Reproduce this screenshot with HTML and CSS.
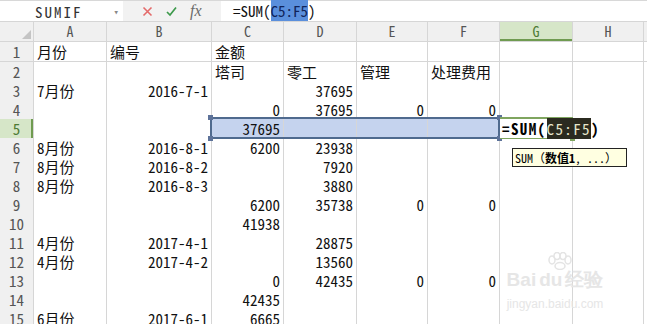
FILE: index.html
```html
<!DOCTYPE html>
<html lang="zh">
<head>
  <meta charset="UTF-8" />
  <title>SUM</title>
  <link rel="stylesheet" href="styles.css">
</head>
<body>

  <!-- formula bar -->
  <div class="fbar">
    <div class="namebox"><span class="name">SUMIF</span><span class="drop">&#9662;</span></div>
    <div class="tools">
      <svg class="ico" width="11" height="11" viewBox="0 0 11 11"><path d="M1.5 1.5 L9.5 9.5 M9.5 1.5 L1.5 9.5" stroke="#e46a6a" stroke-width="1.6" fill="none"/></svg>
      <svg class="ico" width="11" height="11" viewBox="0 0 11 11"><path d="M1 6 L4 9 L10 1.5" stroke="#3d9a4c" stroke-width="1.7" fill="none"/></svg>
      <span class="fx">fx</span>
    </div>
    <div class="formula">=SUM(<span class="hl">C5:F5</span>)</div>
  </div>

  <!-- sheet -->
  <div class="sheet">
    <div class="r hdr">
      <div class="corner"><svg width="9" height="9" viewBox="0 0 9 9"><path d="M9 0 L9 9 L0 9 Z" fill="#c4c4c4"/></svg></div>
      <div>A</div><div>B</div><div>C</div><div>D</div><div>E</div><div>F</div><div class="cur">G</div><div>H</div><div></div>
    </div>
    <div class="r tall">
      <div class="h">1</div><div>月份</div><div>编号</div><div>金额</div><div></div><div></div><div></div><div></div><div></div><div></div>
    </div>
    <div class="r">
      <div class="h">2</div><div></div><div></div><div>塔司</div><div>零工</div><div>管理</div><div>处理费用</div><div></div><div></div><div></div>
    </div>
    <div class="r">
      <div class="h">3</div><div>7月份</div><div class="n">2016-7-1</div><div></div><div class="n">37695</div><div></div><div></div><div></div><div></div><div></div>
    </div>
    <div class="r">
      <div class="h">4</div><div></div><div></div><div class="n">0</div><div class="n">37695</div><div class="n">0</div><div class="n">0</div><div></div><div></div><div></div>
    </div>
    <div class="r">
      <div class="h cur">5</div><div></div><div></div><div class="n sel">37695</div><div class="sel"></div><div class="sel"></div><div class="sel"></div>
      <div class="edit">=SUM(<span class="hl2">C5:F5</span>)</div><div></div><div></div>
    </div>
    <div class="r">
      <div class="h">6</div><div>8月份</div><div class="n">2016-8-1</div><div class="n">6200</div><div class="n">23938</div><div></div><div></div><div></div><div></div><div></div>
    </div>
    <div class="r">
      <div class="h">7</div><div>8月份</div><div class="n">2016-8-2</div><div></div><div class="n">7920</div><div></div><div></div><div></div><div></div><div></div>
    </div>
    <div class="r">
      <div class="h">8</div><div>8月份</div><div class="n">2016-8-3</div><div></div><div class="n">3880</div><div></div><div></div><div></div><div></div><div></div>
    </div>
    <div class="r">
      <div class="h">9</div><div></div><div></div><div class="n">6200</div><div class="n">35738</div><div class="n">0</div><div class="n">0</div><div></div><div></div><div></div>
    </div>
    <div class="r">
      <div class="h">10</div><div></div><div></div><div class="n">41938</div><div></div><div></div><div></div><div></div><div></div><div></div>
    </div>
    <div class="r">
      <div class="h">11</div><div>4月份</div><div class="n">2017-4-1</div><div></div><div class="n">28875</div><div></div><div></div><div></div><div></div><div></div>
    </div>
    <div class="r">
      <div class="h">12</div><div>4月份</div><div class="n">2017-4-2</div><div></div><div class="n">13560</div><div></div><div></div><div></div><div></div><div></div>
    </div>
    <div class="r">
      <div class="h">13</div><div></div><div></div><div class="n">0</div><div class="n">42435</div><div class="n">0</div><div class="n">0</div><div></div><div></div><div></div>
    </div>
    <div class="r">
      <div class="h">14</div><div></div><div></div><div class="n">42435</div><div></div><div></div><div></div><div></div><div></div><div></div>
    </div>
    <div class="r">
      <div class="h">15</div><div>6月份</div><div class="n">2017-6-1</div><div class="n">6665</div><div></div><div></div><div></div><div></div><div></div><div></div>
    </div>

    <!-- selection overlays -->
    <div class="range">
      <i class="hd tl"></i><i class="hd bl"></i><i class="hd tr"></i><i class="hd br"></i>
    </div>
    <div class="active"><i class="hd2"></i></div>
    <div class="tip">SUM（<b>数值1</b>, ...）</div>
    <div class="mark">
      <svg class="paw" width="30" height="18" viewBox="0 0 30 18"><g fill="none" stroke="#e4e4e4" stroke-width="1.5"><ellipse cx="7" cy="8" rx="3" ry="4"/><ellipse cx="12" cy="4" rx="3" ry="3.5"/><ellipse cx="18" cy="4" rx="3" ry="3.5"/><ellipse cx="23" cy="8" rx="3" ry="4"/><ellipse cx="15" cy="14" rx="5" ry="3.5"/></g></svg>
      <div class="brand">Bai<span class="du">du</span>经验</div>
      <div class="url">jingyan.baidu.com</div>
    </div>
  </div>

</body>
</html>
```

FILE: styles.css
```css
body {
  margin: 0;
  width: 647px;
  height: 324px;
  overflow: hidden;
  background: #fff;
  font-family: "Noto Sans Mono CJK SC", "Noto Sans CJK SC", monospace;
  color: #111;
}

/* formula bar */
.fbar {
  display: flex;
  height: 21px;
  box-sizing: border-box;
  border-top: 1px solid #d8d8d8;
  background: #f2f2f2;
}

.namebox {
  width: 123px;
  box-sizing: border-box;
  padding: 0 4px 0 35px;
  display: flex;
  align-items: center;
  justify-content: space-between;
  background: #fff;
  font-size: 15px;
  color: #333;
}

.name {
  letter-spacing: 2px;
}

.drop {
  font-size: 9px;
  color: #888;
}

.tools {
  width: 98px;
  box-sizing: border-box;
  padding-left: 19px;
  display: flex;
  align-items: center;
  gap: 13px;
}

.fx {
  font-family: "Liberation Serif", serif;
  font-style: italic;
  font-size: 16px;
  color: #6a6a6a;
  line-height: 18px;
}

.formula {
  flex: 1;
  background: #fff;
  padding-left: 12px;
  font-size: 15px;
  line-height: 20px;
  color: #111;
}

.hl {
  background: #5a8fdc;
  color: #10245a;
}

/* grid */
.sheet {
  position: relative;
  display: flex;
  flex-direction: column;
  gap: 1px;
  padding-top: 1px;
  background: #d6d6d6;
}

.r {
  display: grid;
  grid-template-columns: 33px 72px 104px 71px 72px 70px 71px 72px 70px 1fr;
  column-gap: 1px;
  height: 18px;
}

.r.hdr,
.r.tall {
  height: 19px;
}

.r > div {
  background: #fff;
  padding: 0 3px;
  font-size: 15px;
  line-height: 19px;
  white-space: nowrap;
}

.r > .n {
  text-align: right;
}

.r > .sel {
  background: #c5d3ee;
}

.hdr > div {
  background: #f0f0f0;
  text-align: center;
  font-size: 14px;
  color: #555;
  padding: 0;
}

.hdr > .corner {
  display: flex;
  align-items: flex-end;
  justify-content: flex-end;
  padding: 0 2px 2px 0;
}

.r > .h {
  background: #f0f0f0;
  text-align: center;
  color: #555;
  padding: 0;
}

.hdr > .cur {
  background: #d6e6c8;
  color: #4d7a34;
  box-shadow: inset 0 -2px #6f9b50;
}

.r > .h.cur {
  background: #d6e6c8;
  color: #4d7a34;
  box-shadow: inset -2px 0 #6f9b50;
}

.r > .edit {
  z-index: 1;
  padding-left: 2px;
  font-size: 15px;
  letter-spacing: 1.4px;
  font-weight: bold;
  color: #000;
}

.hl2 {
  background: #2b2b20;
  color: #e6e6cc;
  font-weight: normal;
}

/* overlays */
.range {
  position: absolute;
  left: 210px;
  top: 96px;
  width: 290px;
  height: 22px;
  box-sizing: border-box;
  border: 2px solid #4f6a8e;
}

.hd {
  position: absolute;
  width: 5px;
  height: 5px;
  background: #5d7299;
}

.tl { left: -4px; top: -4px; }
.bl { left: -4px; bottom: -4px; }
.tr { right: -4px; top: -4px; }
.br { right: -4px; bottom: -4px; }

.active {
  position: absolute;
  left: 500px;
  top: 96px;
  width: 73px;
  height: 22px;
  box-sizing: border-box;
  border-top: 2px solid #7fa55f;
  border-bottom: 2px solid #7fa55f;
}

.hd2 {
  position: absolute;
  right: -2px;
  bottom: -4px;
  width: 5px;
  height: 5px;
  background: #7fa55f;
}

.tip {
  position: absolute;
  left: 512px;
  top: 127px;
  width: 115px;
  height: 19px;
  box-sizing: border-box;
  border: 1px solid #222;
  background: #ffffe1;
  padding-left: 2px;
  font-size: 12px;
  line-height: 17px;
  white-space: nowrap;
  color: #000;
}

/* watermark */
.mark {
  position: absolute;
  left: 497px;
  top: 231px;
  width: 116px;
  display: flex;
  flex-direction: column;
  align-items: center;
  font-family: "Liberation Sans", sans-serif;
  color: #e6e6e6;
  white-space: nowrap;
}

.paw {
  margin-left: 10px;
}

.brand {
  font-size: 19px;
  line-height: 20px;
  font-weight: bold;
}

.brand .du {
  margin: 0 3px;
}

.url {
  font-size: 12px;
  line-height: 16px;
  margin-top: 6px;
}
```
